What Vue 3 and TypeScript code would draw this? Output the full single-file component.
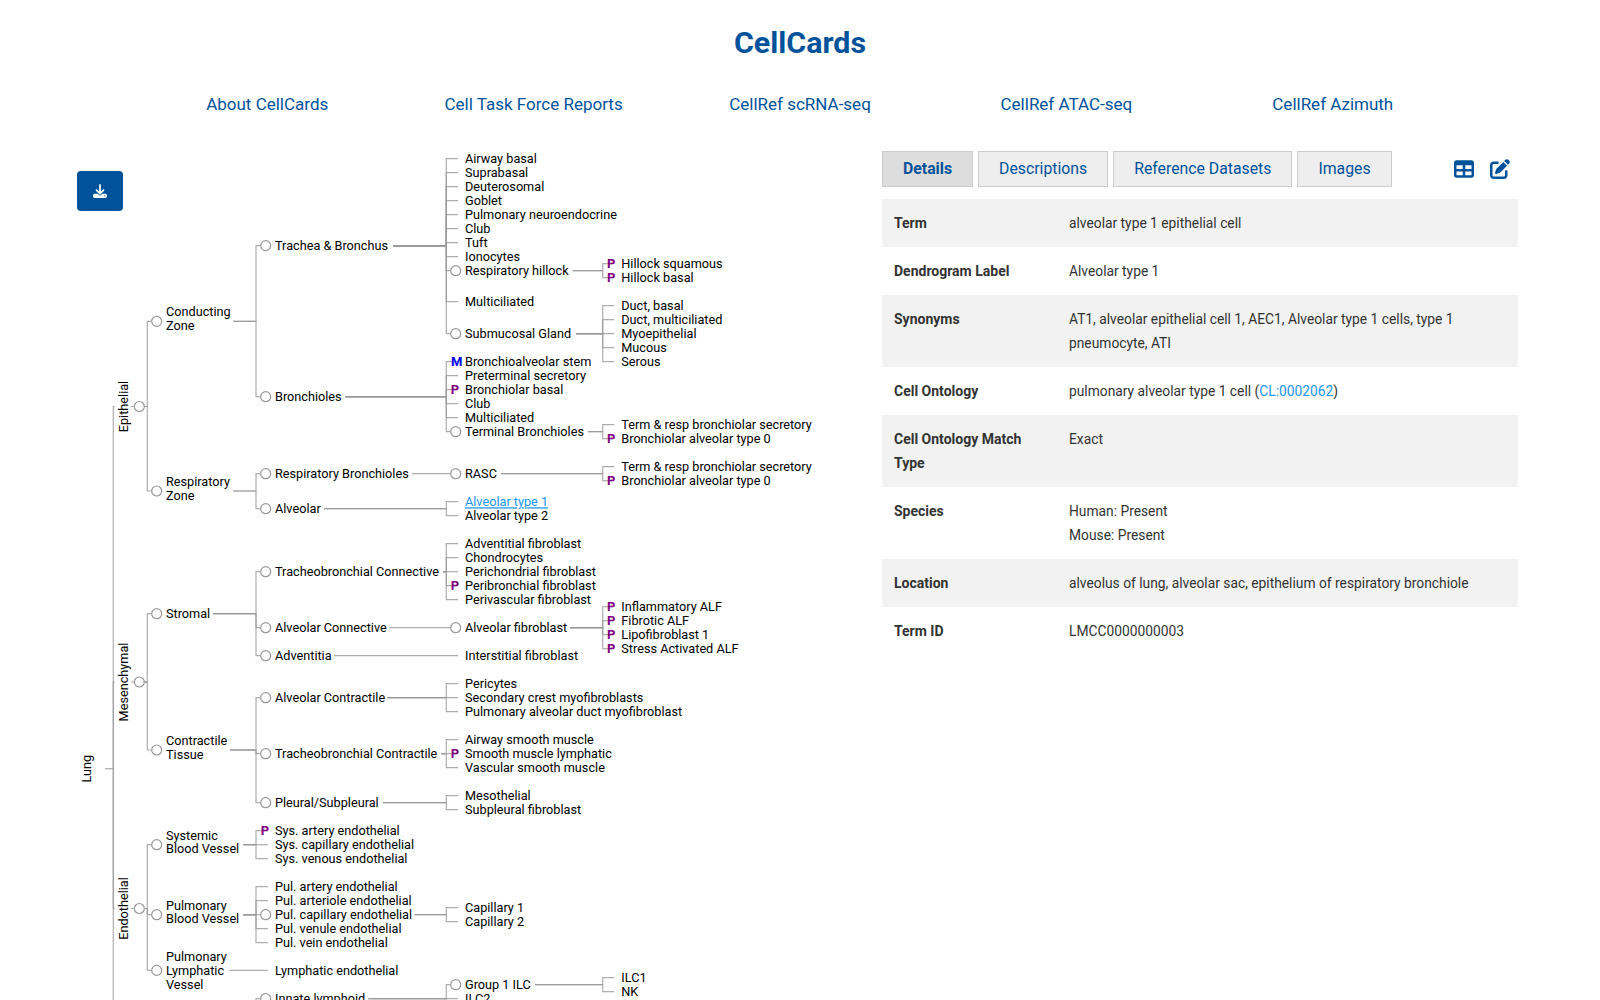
<template>
  <div class="page">
    <h1 class="title">CellCards</h1>
    <nav class="top-nav">
      <a v-for="item in navItems" :key="item" class="nav-link">{{ item }}</a>
    </nav>
    <div class="main">
      <section class="tree-panel">
        <button type="button" class="download-btn" aria-label="Download">
          <svg class="download-icon" viewBox="0 0 512 512">
            <path fill="currentColor" d="M288 32c0-17.7-14.3-32-32-32s-32 14.3-32 32V274.7l-73.4-73.4c-12.5-12.5-32.8-12.5-45.3 0s-12.5 32.8 0 45.3l128 128c12.5 12.5 32.8 12.5 45.3 0l128-128c12.5-12.5 12.5-32.8 0-45.3s-32.8-12.5-45.3 0L288 274.7V32zM64 352c-35.3 0-64 28.7-64 64v32c0 35.3 28.7 64 64 64H448c35.3 0 64-28.7 64-64V416c0-35.3-28.7-64-64-64H346.5l-45.3 45.3c-25 25-65.5 25-90.5 0L165.5 352H64zm368 56a24 24 0 1 1 0 48 24 24 0 1 1 0-48z" />
          </svg>
        </button>
        <svg class="tree" width="880" height="849" viewBox="0 151 880 849">
          <path v-for="(d, i) in links" :key="i" class="link" :d="d" />
          <circle v-for="(c, i) in circles" :key="i" class="node" :cx="c.x" :cy="c.y" r="5" />
          <text
            v-for="(r, i) in rotated"
            :key="i"
            class="label"
            text-anchor="middle"
            :transform="`rotate(-90 ${r.x} ${r.y})`"
            :x="r.x"
            :y="r.y"
          >{{ r.text }}</text>
          <text
            v-for="(l, i) in labels"
            :key="i"
            class="label"
            :class="{ 'label-link': l.active }"
            :x="l.x"
            :y="l.y"
          >{{ l.text }}</text>
          <text
            v-for="(m, i) in markers"
            :key="i"
            class="marker"
            :class="m.text === 'M' ? 'marker-m' : 'marker-p'"
            :x="m.x"
            :y="m.y"
          >{{ m.text }}</text>
        </svg>
      </section>
      <section class="detail-panel">
        <div class="tab-bar">
          <button
            v-for="(tab, i) in tabs"
            :key="tab"
            type="button"
            class="tab"
            :class="{ active: i === 0 }"
          >{{ tab }}</button>
          <div class="tab-icons">
            <svg class="tab-icon" viewBox="0 0 512 512">
              <path fill="currentColor" d="M64 256V160H224v96H64zm0 64H224v96H64V320zm224 96V320H448v96H288zM448 256H288V160H448v96zM64 32C28.7 32 0 60.7 0 96V416c0 35.3 28.7 64 64 64H448c35.3 0 64-28.7 64-64V96c0-35.3-28.7-64-64-64H64z" />
            </svg>
            <svg class="tab-icon" viewBox="0 0 512 512">
              <path fill="currentColor" d="M471.6 21.7c-21.9-21.9-57.3-21.9-79.2 0L362.3 51.7l97.9 97.9 30.1-30.1c21.9-21.9 21.9-57.3 0-79.2L471.6 21.7zm-299.2 220c-6.1 6.1-10.8 13.6-13.5 21.9l-29.6 88.8c-2.9 8.6-.6 18.1 5.8 24.6s15.9 8.7 24.6 5.8l88.8-29.6c8.2-2.7 15.7-7.4 21.9-13.5L437.7 172.3 339.7 74.3 172.4 241.7zM96 64C43 64 0 107 0 160V416c0 53 43 96 96 96H352c53 0 96-43 96-96V320c0-17.7-14.3-32-32-32s-32 14.3-32 32v96c0 17.7-14.3 32-32 32H96c-17.7 0-32-14.3-32-32V160c0-17.7 14.3-32 32-32h96c17.7 0 32-14.3 32-32s-14.3-32-32-32H96z" />
            </svg>
          </div>
        </div>
        <table class="detail-table">
          <tbody>
            <tr v-for="row in rows" :key="row.key">
              <th>{{ row.key }}</th>
              <td>
                <template v-if="row.key === 'Cell Ontology'">
                  pulmonary alveolar type 1 cell (<a class="cl-link">CL:0002062</a>)
                </template>
                <template v-else>
                  <div v-for="line in row.lines" :key="line">{{ line }}</div>
                </template>
              </td>
            </tr>
          </tbody>
        </table>
      </section>
    </div>
  </div>
</template>

<script setup lang="ts">
interface TreeNode {
  t: string
  y: number
  end?: number
  m?: 'P' | 'M'
  active?: boolean
  kids?: TreeNode[]
}

const navItems = ['About CellCards', 'Cell Task Force Reports', 'CellRef scRNA-seq', 'CellRef ATAC-seq', 'CellRef Azimuth']
const tabs = ['Details', 'Descriptions', 'Reference Datasets', 'Images']

const rows = [
  { key: 'Term', lines: ['alveolar type 1 epithelial cell'] },
  { key: 'Dendrogram Label', lines: ['Alveolar type 1'] },
  { key: 'Synonyms', lines: ['AT1, alveolar epithelial cell 1, AEC1, Alveolar type 1 cells, type 1 pneumocyte, ATI'] },
  { key: 'Cell Ontology', lines: [] },
  { key: 'Cell Ontology Match Type', lines: ['Exact'] },
  { key: 'Species', lines: ['Human: Present', 'Mouse: Present'] },
  { key: 'Location', lines: ['alveolus of lung, alveolar sac, epithelium of respiratory bronchiole'] },
  { key: 'Term ID', lines: ['LMCC0000000003'] },
]

// leaf helper, y is the centre of the text line
const leaf = (t: string, y: number, m?: 'P' | 'M'): TreeNode => ({ t, y, m })

const tree: TreeNode = {
  t: 'Lung',
  y: 768.7,
  end: 105,
  kids: [
    {
      t: 'Epithelial',
      y: 406.5,
      kids: [
        {
          t: 'Conducting\nZone',
          y: 321.3,
          end: 233.3,
          kids: [
            {
              t: 'Trachea & Bronchus',
              y: 245.6,
              end: 393.3,
              kids: [
                leaf('Airway basal', 158.7),
                leaf('Suprabasal', 172.7),
                leaf('Deuterosomal', 186.7),
                leaf('Goblet', 200.7),
                leaf('Pulmonary neuroendocrine', 214.7),
                leaf('Club', 228.7),
                leaf('Tuft', 242.7),
                leaf('Ionocytes', 256.7),
                {
                  t: 'Respiratory hillock',
                  y: 270.7,
                  end: 572.7,
                  kids: [leaf('Hillock squamous', 263.7, 'P'), leaf('Hillock basal', 277.7, 'P')],
                },
                leaf('Multiciliated', 301.7),
                {
                  t: 'Submucosal Gland',
                  y: 333.7,
                  end: 576,
                  kids: [
                    leaf('Duct, basal', 305.7),
                    leaf('Duct, multiciliated', 319.7),
                    leaf('Myoepithelial', 333.7),
                    leaf('Mucous', 347.7),
                    leaf('Serous', 361.7),
                  ],
                },
              ],
            },
            {
              t: 'Bronchioles',
              y: 396.7,
              end: 345.3,
              kids: [
                leaf('Bronchioalveolar stem', 361.7, 'M'),
                leaf('Preterminal secretory', 375.7),
                leaf('Bronchiolar basal', 389.7, 'P'),
                leaf('Club', 403.7),
                leaf('Multiciliated', 417.7),
                {
                  t: 'Terminal Bronchioles',
                  y: 431.7,
                  end: 587.7,
                  kids: [leaf('Term & resp bronchiolar secretory', 424.7), leaf('Bronchiolar alveolar type 0', 438.7, 'P')],
                },
              ],
            },
          ],
        },
        {
          t: 'Respiratory\nZone',
          y: 491,
          end: 233.3,
          kids: [
            {
              t: 'Respiratory Bronchioles',
              y: 473.7,
              end: 412,
              kids: [
                {
                  t: 'RASC',
                  y: 473.7,
                  end: 501,
                  kids: [leaf('Term & resp bronchiolar secretory', 466.7), leaf('Bronchiolar alveolar type 0', 480.7, 'P')],
                },
              ],
            },
            {
              t: 'Alveolar',
              y: 508.7,
              end: 324,
              kids: [{ t: 'Alveolar type 1', y: 501.7, active: true }, leaf('Alveolar type 2', 515.7)],
            },
          ],
        },
      ],
    },
    {
      t: 'Mesenchymal',
      y: 682,
      kids: [
        {
          t: 'Stromal',
          y: 613.7,
          end: 213.3,
          kids: [
            {
              t: 'Tracheobronchial Connective',
              y: 571.7,
              end: 443,
              kids: [
                leaf('Adventitial fibroblast', 543.7),
                leaf('Chondrocytes', 557.7),
                leaf('Perichondrial fibroblast', 571.7),
                leaf('Peribronchial fibroblast', 585.7, 'P'),
                leaf('Perivascular fibroblast', 599.7),
              ],
            },
            {
              t: 'Alveolar Connective',
              y: 627.7,
              end: 389.3,
              kids: [
                {
                  t: 'Alveolar fibroblast',
                  y: 627.7,
                  end: 570,
                  kids: [
                    leaf('Inflammatory ALF', 606.7, 'P'),
                    leaf('Fibrotic ALF', 620.7, 'P'),
                    leaf('Lipofibroblast 1', 634.7, 'P'),
                    leaf('Stress Activated ALF', 648.7, 'P'),
                  ],
                },
              ],
            },
            { t: 'Adventitia', y: 655.7, end: 334, kids: [leaf('Interstitial fibroblast', 655.7)] },
          ],
        },
        {
          t: 'Contractile\nTissue',
          y: 750,
          end: 230,
          kids: [
            {
              t: 'Alveolar Contractile',
              y: 697.7,
              end: 387.3,
              kids: [
                leaf('Pericytes', 683.7),
                leaf('Secondary crest myofibroblasts', 697.7),
                leaf('Pulmonary alveolar duct myofibroblast', 711.7),
              ],
            },
            {
              t: 'Tracheobronchial Contractile',
              y: 753.7,
              end: 441.3,
              kids: [
                leaf('Airway smooth muscle', 739.7),
                leaf('Smooth muscle lymphatic', 753.7, 'P'),
                leaf('Vascular smooth muscle', 767.7),
              ],
            },
            {
              t: 'Pleural/Subpleural',
              y: 802.7,
              end: 382.7,
              kids: [leaf('Mesothelial', 795.7), leaf('Subpleural fibroblast', 809.7)],
            },
          ],
        },
      ],
    },
    {
      t: 'Endothelial',
      y: 908.5,
      kids: [
        {
          t: 'Systemic\nBlood Vessel',
          y: 844.7,
          end: 243.3,
          kids: [
            leaf('Sys. artery endothelial', 830.7, 'P'),
            leaf('Sys. capillary endothelial', 844.7),
            leaf('Sys. venous endothelial', 858.7),
          ],
        },
        {
          t: 'Pulmonary\nBlood Vessel',
          y: 914.7,
          end: 243.3,
          kids: [
            leaf('Pul. artery endothelial', 886.7),
            leaf('Pul. arteriole endothelial', 900.7),
            {
              t: 'Pul. capillary endothelial',
              y: 914.7,
              end: 414.7,
              kids: [leaf('Capillary 1', 907.7), leaf('Capillary 2', 921.7)],
            },
            leaf('Pul. venule endothelial', 928.7),
            leaf('Pul. vein endothelial', 942.7),
          ],
        },
        {
          t: 'Pulmonary\nLymphatic\nVessel',
          y: 970.4,
          end: 229.3,
          kids: [leaf('Lymphatic endothelial', 970.4)],
        },
      ],
    },
    {
      t: 'Immune',
      y: 1200,
      kids: [
        {
          t: 'Lymphoid',
          y: 1100,
          end: 220,
          kids: [
            {
              t: 'Innate lymphoid',
              y: 998.7,
              end: 368.3,
              kids: [
                {
                  t: 'Group 1 ILC',
                  y: 984.7,
                  end: 535,
                  kids: [leaf('ILC1', 977.7), leaf('NK', 991.7)],
                },
                leaf('ILC2', 998.7),
                leaf('ILC3', 1012.7),
              ],
            },
          ],
        },
      ],
    },
  ],
}

// x positions of every depth: parent spine, node circle and label
const columns = [
  { spine: 0, circle: 0, text: 0 },
  { spine: 113.3, circle: 139.3, text: 127.5 },
  { spine: 147.3, circle: 156.7, text: 166 },
  { spine: 256, circle: 265.7, text: 275 },
  { spine: 446.3, circle: 455.7, text: 465 },
  { spine: 602.7, circle: 612, text: 621.3 },
]

const links: string[] = []
const circles: { x: number; y: number }[] = []
const labels: { text: string; x: number; y: number; active?: boolean }[] = []
const rotated: { text: string; x: number; y: number }[] = []
const markers: { text: string; x: number; y: number }[] = []

function walk(node: TreeNode, depth: number, parent?: TreeNode) {
  const col = columns[depth]
  const hasKids = !!node.kids?.length

  if (depth <= 1) {
    rotated.push({ text: node.t, x: depth === 0 ? 91 : col.text, y: node.y })
  } else {
    const lines = node.t.split('\n')
    const shift = lines.length === 2 ? -2.8 : 0
    const top = node.y + shift - ((lines.length - 1) * 13.7) / 2
    lines.forEach((line, i) => {
      labels.push({ text: line, x: col.text, y: top + i * 13.7 + 4.6, active: node.active })
    })
  }

  if (parent) {
    let target = col.text - 7
    if (hasKids) target = col.circle - 5
    if (depth === 1) target = col.spine + 1.5
    const start = depth === 1 ? col.spine : parent.end ?? columns[depth - 1].circle + 5
    links.push(`M${start},${parent.y}H${col.spine}V${node.y}H${target}`)
  }
  if (depth === 0) links.push(`M${node.end},${node.y}H${columns[1].spine}`)
  if (depth === 1) links.push(`M131,${node.y}H${col.circle}M${col.circle},${node.y}H${columns[2].spine}`)

  if (hasKids && depth > 0) circles.push({ x: col.circle, y: node.y })
  if (node.m) markers.push({ text: node.m, x: col.text - (node.m === 'M' ? 14 : 14.2), y: node.y + 4.6 })

  node.kids?.forEach((kid) => walk(kid, depth + 1, node))
}

walk(tree, 0)
</script>

<style scoped>
.page {
  width: 1600px;
  height: 1000px;
  overflow: hidden;
  background: #fff;
  font-family: Roboto, "Liberation Sans", sans-serif;
}

.title {
  margin: 0;
  padding-top: 22px;
  font-size: 30.4px;
  line-height: 42px;
  font-weight: 700;
  text-align: center;
  color: #00529b;
}

.top-nav {
  display: grid;
  grid-template-columns: repeat(5, 266.4px);
  justify-content: center;
  margin-top: 28px;
}

.nav-link {
  font-size: 17px;
  line-height: 24px;
  text-align: center;
  color: #00529b;
}

.main {
  display: flex;
  margin-top: 35px;
}

.tree-panel {
  position: relative;
  flex: 0 0 882px;
  height: 849px;
}

.tree {
  display: block;
}

.download-btn {
  position: absolute;
  left: 77px;
  top: 20px;
  display: flex;
  align-items: center;
  justify-content: center;
  width: 46px;
  height: 40px;
  padding: 0;
  border: none;
  border-radius: 4px;
  background: #00529b;
  color: #fff;
}

.download-icon {
  width: 14px;
  height: 14px;
}

.link {
  fill: none;
  stroke: #999;
  stroke-opacity: 0.8;
  stroke-width: 1.2;
}

.node {
  fill: #fff;
  stroke: #999;
  stroke-width: 1.2;
}

.label {
  font-size: 12.7px;
  fill: #000;
}

.label-link {
  fill: #2196f3;
  text-decoration: underline;
}

.marker {
  font-size: 13px;
  font-weight: 700;
}

.marker-p {
  fill: #800080;
}

.marker-m {
  fill: #0000ff;
}

.detail-panel {
  width: 636px;
}

.tab-bar {
  display: flex;
  align-items: center;
  gap: 5px;
  height: 36px;
  margin-bottom: 12px;
}

.tab {
  height: 36px;
  padding: 0 20px 2px;
  border: 1px solid #ccc;
  background: #eee;
  font-family: inherit;
  font-size: 15.8px;
  color: #00529b;
}

.tab.active {
  background: #ddd;
  font-weight: 700;
}

.tab-icons {
  display: flex;
  gap: 16px;
  margin-left: auto;
  margin-right: 8px;
  color: #00529b;
}

.tab-icon {
  display: block;
  width: 20px;
  height: 20px;
}

.detail-table {
  width: 100%;
  border-collapse: collapse;
  font-size: 13.8px;
  line-height: 24px;
  color: #333;
}

.detail-table tr:nth-child(odd) {
  background: #f2f2f2;
}

.detail-table th {
  width: 151px;
  padding: 12px;
  font-size: 14px;
  font-weight: 700;
  text-align: left;
  vertical-align: top;
}

.detail-table td {
  padding: 12px;
  vertical-align: top;
}

.cl-link {
  color: #2196f3;
}
</style>
